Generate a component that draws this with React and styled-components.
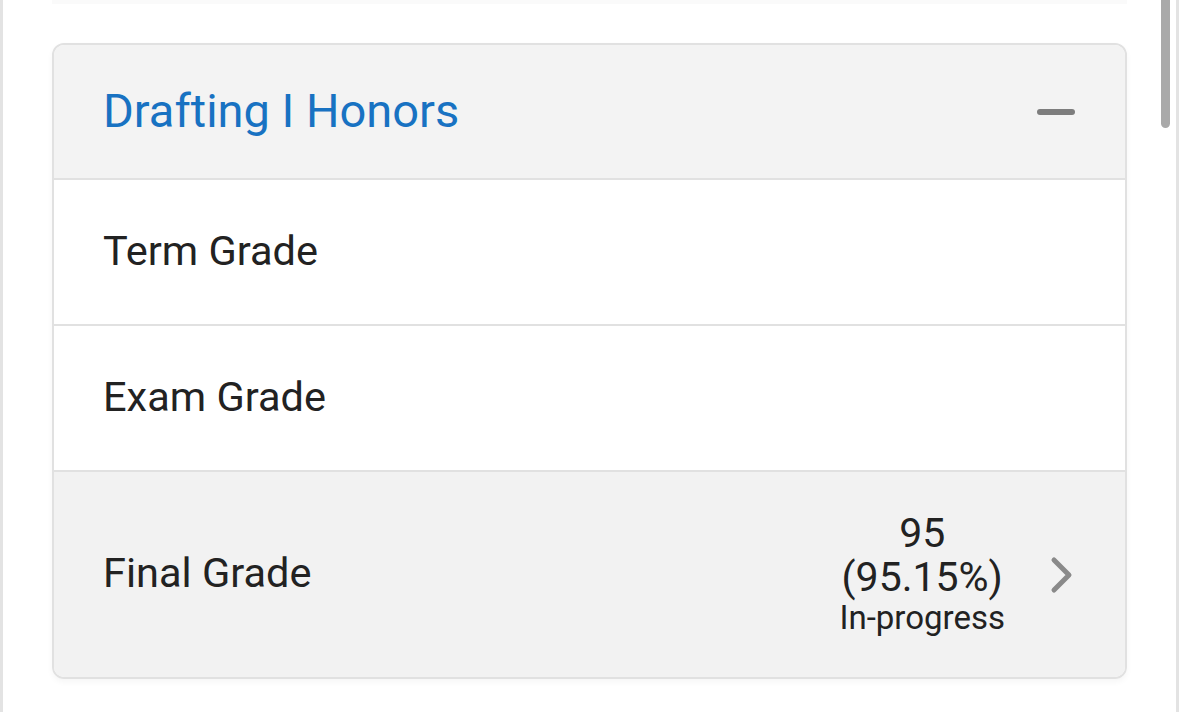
import React from "react";
import styled, { createGlobalStyle } from "styled-components";

const GlobalStyle = createGlobalStyle`
  html, body {
    margin: 0;
    padding: 0;
    background: #ffffff;
    font-family: Roboto, "Noto Sans", "Liberation Sans", sans-serif;
  }
`;

const rows = [
  { label: "Term Grade" },
  { label: "Exam Grade" },
];

function App() {
  return (
    <>
      <GlobalStyle />
      <Page>
        <TopShade />
        <Card>
          <Header>
            <Title>Drafting I Honors</Title>
            <Minus />
          </Header>
          {rows.map((row) => (
            <Row key={row.label}>
              <Label>{row.label}</Label>
            </Row>
          ))}
          <Row $final>
            <Label>Final Grade</Label>
            <Result>
              <Score>
                <div>95</div>
                <div>(95.15%)</div>
                <Status>In-progress</Status>
              </Score>
              <svg width="26" height="40" viewBox="0 0 26 40">
                <path
                  d="M5 5 L20 20 L5 35"
                  fill="none"
                  stroke="#8a8a8a"
                  strokeWidth="5"
                  strokeLinecap="round"
                  strokeLinejoin="round"
                />
              </svg>
            </Result>
          </Row>
        </Card>
        <Thumb />
      </Page>
    </>
  );
}

export default App;

const Page = styled.div`
  position: relative;
  box-sizing: border-box;
  height: 712px;
  overflow: hidden;
  border-left: 3px solid #e3e3e3;
  border-right: 3px solid #e3e3e3;
  padding: 0 49px;
`;

const TopShade = styled.div`
  height: 4px;
  margin: 0 0 39px;
  background: #fafafa;
`;

const Thumb = styled.div`
  position: absolute;
  top: -10px;
  right: 6px;
  width: 9px;
  height: 138px;
  border-radius: 5px;
  background: #a9a9a9;
`;

const Card = styled.div`
  border: 2px solid #e1e1e1;
  border-radius: 12px;
  overflow: hidden;
  box-shadow: 0 3px 6px rgba(0, 0, 0, 0.04);
`;

const Header = styled.div`
  display: flex;
  align-items: center;
  justify-content: space-between;
  height: 133px;
  padding: 0 50px 0 49px;
  background: #f3f3f3;
  border-bottom: 2px solid #e1e1e1;
`;

const Title = styled.div`
  color: #1872c2;
  font-size: 47px;
  margin-top: -3px;
`;

const Minus = styled.div`
  width: 38px;
  height: 6px;
  border-radius: 3px;
  background: #7d7d7d;
`;

const Row = styled.div`
  display: flex;
  align-items: center;
  justify-content: space-between;
  height: ${(p) => (p.$final ? "205px" : "144px")};
  padding: 0 50px 0 49px;
  background: ${(p) => (p.$final ? "#f2f2f2" : "#ffffff")};
  border-bottom: ${(p) => (p.$final ? "none" : "2px solid #e1e1e1")};
`;

const Label = styled.div`
  color: #222222;
  font-size: 41.5px;
  margin-top: -4px;
`;

const Result = styled.div`
  display: flex;
  align-items: center;
  gap: 44px;
`;

const Score = styled.div`
  display: flex;
  flex-direction: column;
  align-items: center;
  color: #222222;
  font-size: 41px;
  line-height: 44px;
  margin-top: -2px;
`;

const Status = styled.div`
  font-size: 33px;
  line-height: 38px;
`;
